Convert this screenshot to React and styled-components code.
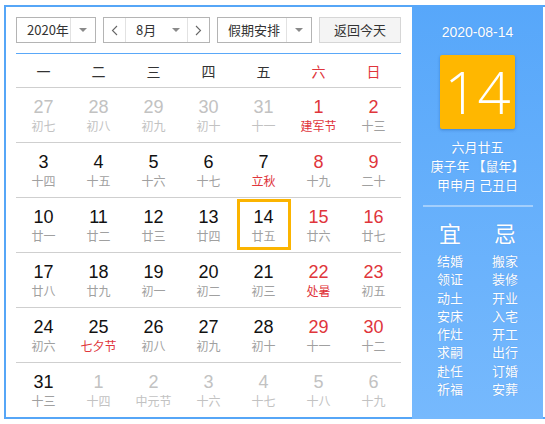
import React from "react";
import styled, { createGlobalStyle } from "styled-components";

const GlobalStyle = createGlobalStyle`
  html, body { margin: 0; padding: 0; background: #fff; }
  body { font-family: "Liberation Sans", "Noto Sans CJK SC", sans-serif; }
`;

const weekDays = ["一", "二", "三", "四", "五", "六", "日"];

// [day, lunar, flags]  o = other month, f = festival/solar term in red
const rows = [
  [[27, "初七", "o"], [28, "初八", "o"], [29, "初九", "o"], [30, "初十", "o"], [31, "十一", "o"], [1, "建军节", "f"], [2, "十三"]],
  [[3, "十四"], [4, "十五"], [5, "十六"], [6, "十七"], [7, "立秋", "f"], [8, "十九"], [9, "二十"]],
  [[10, "廿一"], [11, "廿二"], [12, "廿三"], [13, "廿四"], [14, "廿五", "s"], [15, "廿六"], [16, "廿七"]],
  [[17, "廿八"], [18, "廿九"], [19, "初一"], [20, "初二"], [21, "初三"], [22, "处暑", "f"], [23, "初五"]],
  [[24, "初六"], [25, "七夕节", "f"], [26, "初八"], [27, "初九"], [28, "初十"], [29, "十一"], [30, "十二"]],
  [[31, "十三"], [1, "十四", "o"], [2, "中元节", "o"], [3, "十六", "o"], [4, "十七", "o"], [5, "十八", "o"], [6, "十九", "o"]],
];

const yi = ["结婚", "领证", "动土", "安床", "作灶", "求嗣", "赴任", "祈福"];
const ji = ["搬家", "装修", "开业", "入宅", "开工", "出行", "订婚", "安葬"];

const Page = styled.div`
  padding: 5px 0 0 4px;
`;

const Frame = styled.div`
  width: 541px;
  height: 414px;
  box-sizing: border-box;
  border: 2px solid #56a6f7;
  border-right: none;
  display: flex;
`;

const Main = styled.div`
  width: 406px;
  padding: 10px 11px 0 10px;
  box-sizing: border-box;
  display: flex;
  flex-direction: column;
`;

const Toolbar = styled.div`
  display: flex;
  gap: 7px;
  height: 26px;
  margin-bottom: 10px;
`;

const Select = styled.div`
  display: flex;
  height: 26px;
  box-sizing: border-box;
  border: 1px solid #b4b4b4;
  background: #fff;
  font-family: "Noto Sans CJK SC", sans-serif;
  font-size: 13px;
  color: #333;
`;

const SelectText = styled.div`
  width: ${(p) => p.w}px;
  padding-left: ${(p) => p.pl || 10}px;
  box-sizing: border-box;
  line-height: 24px;
  white-space: nowrap;
`;

const ArrowPart = styled.div`
  width: ${(p) => p.w || 25}px;
  display: flex;
  align-items: center;
  justify-content: center;
  border-left: ${(p) => (p.plain ? "none" : "1px solid #e2e2e2")};
  box-sizing: border-box;
`;

const Triangle = styled.span`
  width: 0;
  height: 0;
  border-left: 4px solid transparent;
  border-right: 4px solid transparent;
  border-top: 4px solid #8a8a8a;
`;

const NavBtn = styled.div`
  width: ${(p) => p.w}px;
  display: flex;
  align-items: center;
  justify-content: center;
  box-sizing: border-box;
  border-left: ${(p) => (p.divide ? "1px solid #e2e2e2" : "none")};
  border-right: ${(p) => (p.divideRight ? "1px solid #e2e2e2" : "none")};
`;

const TodayBtn = styled.div`
  width: 82px;
  height: 26px;
  box-sizing: border-box;
  border: 1px solid #d6d6d6;
  background: #f4f4f4;
  font-family: "Noto Sans CJK SC", sans-serif;
  font-size: 13px;
  color: #333;
  text-align: center;
  line-height: 24px;
`;

const Grid = styled.div`
  border-top: 1px solid #5aa8f8;
  display: grid;
  grid-template-columns: repeat(7, 55px);
`;

const HeadCell = styled.div`
  height: 33px;
  border-bottom: 1px solid #cfcfcf;
  display: flex;
  align-items: center;
  justify-content: center;
  font-family: "Noto Sans CJK SC", sans-serif;
  font-size: 14px;
  color: ${(p) => (p.weekend ? "#e0353b" : "#333")};
`;

const Cell = styled.div`
  position: relative;
  height: 54px;
  border-bottom: ${(p) => (p.last ? "none" : "1px solid #cfcfcf")};
  display: flex;
  flex-direction: column;
  align-items: center;
  justify-content: center;
  &::after {
    content: "";
    display: ${(p) => (p.selected ? "block" : "none")};
    position: absolute;
    top: 1px;
    left: 1px;
    right: 0;
    bottom: 2px;
    border: 3px solid #fbb400;
  }
`;

const DayNum = styled.div`
  font-family: "Liberation Sans", sans-serif;
  font-size: 18px;
  line-height: 22px;
  color: ${(p) => (p.other ? "#c2c2c2" : p.weekend ? "#e0353b" : "#111")};
`;

const Lunar = styled.div`
  font-family: "Noto Sans CJK SC", sans-serif;
  font-size: 12px;
  line-height: 16px;
  color: ${(p) => (p.other ? "#c2c2c2" : p.red ? "#e0353b" : "#a0a0a0")};
`;

const Side = styled.div`
  width: 131px;
  margin-top: -2px;
  margin-bottom: -2px;
  padding-top: 18px;
  background: linear-gradient(to bottom, #57a7fa, #76b9fd);
  display: flex;
  flex-direction: column;
  align-items: center;
  color: #fff;
  font-family: "Noto Sans CJK SC", sans-serif;
  text-shadow: 0 0 1px rgba(40, 90, 170, 0.35);
`;

const DateLine = styled.div`
  font-family: "Liberation Sans", sans-serif;
  font-size: 14px;
  line-height: 18px;
`;

const DayBox = styled.div`
  margin-top: 14px;
  width: 75px;
  height: 74px;
  border-radius: 2px;
  background: #ffb700;
  box-shadow: 0 1px 3px rgba(0, 60, 140, 0.35);
  display: flex;
  align-items: center;
  justify-content: center;
  font-family: "Open Sans", "Liberation Sans", sans-serif;
  font-weight: 300;
  font-size: 58px;
  line-height: 1;
  text-shadow: none;
`;

const InfoLines = styled.div`
  margin-top: 8px;
  font-size: 13px;
  line-height: 19px;
  text-align: center;
`;

const Divider = styled.div`
  margin-top: 11px;
  width: 110px;
  height: 2px;
  background: rgba(255, 255, 255, 0.4);
`;

const Columns = styled.div`
  margin-top: 11px;
  display: grid;
  grid-template-columns: 55px 55px;
  text-align: center;
`;

const ColTitle = styled.div`
  font-size: 22px;
  line-height: 28px;
  margin-bottom: 6px;
`;

const ColItem = styled.div`
  font-size: 13px;
  line-height: 18.3px;
`;

const Chevron = ({ dir }) => (
  <svg width="7" height="11" viewBox="0 0 7 11">
    <path
      d={dir === "left" ? "M6 1 L1.5 5.5 L6 10" : "M1 1 L5.5 5.5 L1 10"}
      fill="none"
      stroke="#666"
      strokeWidth="1.1"
    />
  </svg>
);

export default function App() {
  return (
    <Page>
      <GlobalStyle />
      <Frame>
        <Main>
          <Toolbar>
            <Select>
              <SelectText w={53} pl={10}>2020年</SelectText>
              <ArrowPart><Triangle /></ArrowPart>
            </Select>
            <Select>
              <NavBtn w={22} divideRight><Chevron dir="left" /></NavBtn>
              <SelectText w={38}>8月</SelectText>
              <ArrowPart w={23} plain><Triangle /></ArrowPart>
              <NavBtn w={22} divide><Chevron dir="right" /></NavBtn>
            </Select>
            <Select>
              <SelectText w={68} pl={10}>假期安排</SelectText>
              <ArrowPart><Triangle /></ArrowPart>
            </Select>
            <TodayBtn>返回今天</TodayBtn>
          </Toolbar>
          <Grid>
            {weekDays.map((d, i) => (
              <HeadCell key={d} weekend={i > 4}>{d}</HeadCell>
            ))}
            {rows.map((row, r) =>
              row.map(([day, lunar, flag], c) => (
                <Cell key={`${r}-${c}`} last={r === rows.length - 1} selected={flag === "s"}>
                  <DayNum other={flag === "o"} weekend={c > 4}>{day}</DayNum>
                  <Lunar other={flag === "o"} red={flag === "f"}>{lunar}</Lunar>
                </Cell>
              ))
            )}
          </Grid>
        </Main>
        <Side>
          <DateLine>2020-08-14</DateLine>
          <DayBox>14</DayBox>
          <InfoLines>
            <div>六月廿五</div>
            <div>庚子年 【鼠年】</div>
            <div>甲申月 己丑日</div>
          </InfoLines>
          <Divider />
          <Columns>
            <div>
              <ColTitle>宜</ColTitle>
              {yi.map((t) => <ColItem key={t}>{t}</ColItem>)}
            </div>
            <div>
              <ColTitle>忌</ColTitle>
              {ji.map((t) => <ColItem key={t}>{t}</ColItem>)}
            </div>
          </Columns>
        </Side>
      </Frame>
    </Page>
  );
}
